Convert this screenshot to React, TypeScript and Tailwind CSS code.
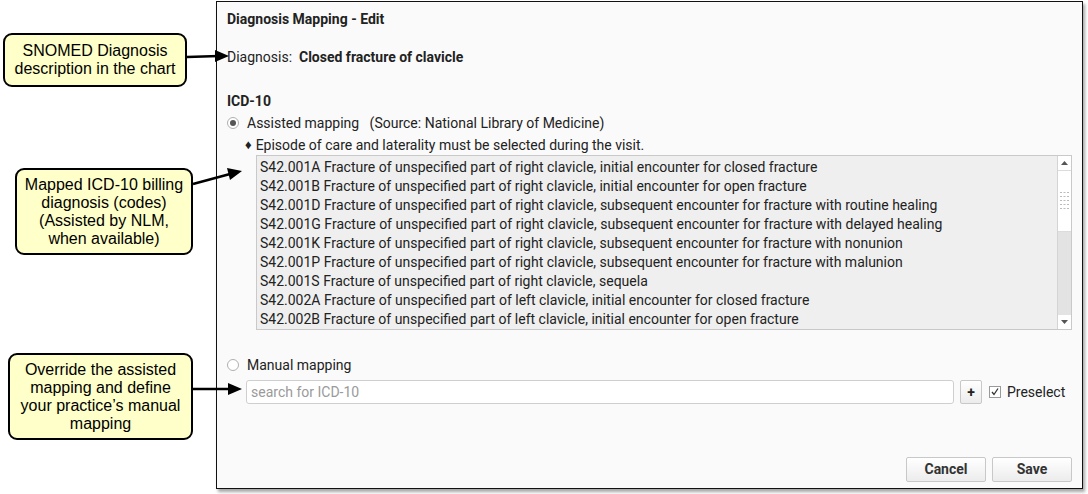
const codes = [
  "S42.001A Fracture of unspecified part of right clavicle, initial encounter for closed fracture",
  "S42.001B Fracture of unspecified part of right clavicle, initial encounter for open fracture",
  "S42.001D Fracture of unspecified part of right clavicle, subsequent encounter for fracture with routine healing",
  "S42.001G Fracture of unspecified part of right clavicle, subsequent encounter for fracture with delayed healing",
  "S42.001K Fracture of unspecified part of right clavicle, subsequent encounter for fracture with nonunion",
  "S42.001P Fracture of unspecified part of right clavicle, subsequent encounter for fracture with malunion",
  "S42.001S Fracture of unspecified part of right clavicle, sequela",
  "S42.002A Fracture of unspecified part of left clavicle, initial encounter for closed fracture",
  "S42.002B Fracture of unspecified part of left clavicle, initial encounter for open fracture",
];

const Callout = ({ className, lines }: { className: string; lines: string[] }) => (
  <div
    className={`flex flex-col items-center justify-center rounded-[9px] border-2 border-black bg-[#ffffc9] text-[16px] leading-[18px] text-black ${className}`}
    style={{ fontFamily: '"Liberation Sans", Arial, sans-serif' }}
  >
    {lines.map((l) => (
      <span key={l}>{l}</span>
    ))}
  </div>
);

const Radio = ({ checked }: { checked?: boolean }) => (
  <span className="flex h-[12px] w-[12px] items-center justify-center rounded-full border border-[#b0b0b0] bg-white">
    {checked && <span className="h-[6px] w-[6px] rounded-full bg-[#555]" />}
  </span>
);

const Button = ({ label }: { label: string }) => (
  <button className="h-[25px] w-[80px] rounded-[2px] border border-[#c8c8c8] bg-gradient-to-b from-white to-[#ececec] text-[14px] font-bold text-[#333]">
    {label}
  </button>
);

const Arrows = () => (
  <svg className="pointer-events-none absolute left-0 top-0" width="1088" height="494">
    <g stroke="#000" strokeWidth="2.5" fill="none">
      <line x1="187" y1="57" x2="219" y2="56" />
      <line x1="193" y1="184" x2="230" y2="174" />
      <line x1="193" y1="389" x2="230" y2="389" />
    </g>
    <g fill="#000">
      <path d="M229,56 L215,50 L215,62 z" />
      <path d="M242,171 L227,168 L230,180 z" />
      <path d="M242,389 L228,383 L228,395 z" />
    </g>
  </svg>
);

export default function App() {
  return (
    <div className="relative flex h-[494px] w-[1088px] bg-white">
      <div className="flex w-[216px] flex-col">
        <Callout className="ml-[3px] mt-[33px] h-[54px] w-[184px]" lines={["SNOMED Diagnosis", "description in the chart"]} />
        <Callout
          className="ml-[15px] mt-[81px] h-[87px] w-[178px]"
          lines={["Mapped ICD-10 billing", "diagnosis (codes)", "(Assisted by NLM,", "when available)"]}
        />
        <Callout
          className="ml-[8px] mt-[98px] h-[87px] w-[185px]"
          lines={["Override the assisted", "mapping and define", "your practice\u2019s manual", "mapping"]}
        />
      </div>

      <div
        className="mt-[1px] flex h-[488px] w-[867px] flex-col border border-[#111] bg-[#fafafa] pl-[10px] pr-[10px] pt-[9px] text-[14px] text-[#222] shadow-[2px_3px_3px_rgba(0,0,0,0.35)]"
        style={{ fontFamily: 'Roboto, "Noto Sans", sans-serif' }}
      >
        <div className="h-[16px] leading-[16px] font-bold">Diagnosis Mapping - Edit</div>
        <div className="mt-[22px] h-[16px] leading-[16px]">
          Diagnosis:&nbsp; <span className="font-bold">Closed fracture of clavicle</span>
        </div>
        <div className="mt-[28px] h-[16px] leading-[16px] font-bold">ICD-10</div>
        <div className="mt-[5px] flex h-[18px] items-center gap-[8px] pl-[0px]">
          <Radio checked />
          <span>Assisted mapping&nbsp;&nbsp; (Source: National Library of Medicine)</span>
        </div>
        <div className="mt-[5px] flex h-[16px] items-center gap-[4px] pl-[18px] leading-[16px]">
          <span className="text-[13px]">&#9830;</span>
          <span>Episode of care and laterality must be selected during the visit.</span>
        </div>
        <div className="ml-[29px] mt-[2px] flex h-[175px] w-[816px] border border-[#c9c9c9] bg-[#efefef]">
          <div className="flex-1 overflow-hidden pl-[3px] pt-[2px]">
            {codes.map((c) => (
              <div key={c} className="h-[19px] whitespace-nowrap leading-[19px]">
                {c}
              </div>
            ))}
          </div>
          <div className="flex w-[14px] flex-col border-l border-[#d4d4d4]">
            <div className="flex h-[14px] items-center justify-center bg-white">
              <svg width="7" height="4"><path d="M0,4 L3.5,0 L7,4 z" fill="#555" /></svg>
            </div>
            <div className="flex h-[62px] flex-col items-center justify-center border-y border-[#dcdcdc] bg-white">
              <svg width="9" height="18">
                {[0, 4, 8, 12, 16].map((y) => (
                  <g key={y} fill="#bbb">
                    <rect x="0" y={y} width="2" height="1" />
                    <rect x="3.5" y={y} width="2" height="1" />
                    <rect x="7" y={y} width="2" height="1" />
                  </g>
                ))}
              </svg>
            </div>
            <div className="flex-1 bg-[#e3e3e3]" />
            <div className="flex h-[14px] items-center justify-center bg-white">
              <svg width="7" height="4"><path d="M0,0 L3.5,4 L7,0 z" fill="#555" /></svg>
            </div>
          </div>
        </div>
        <div className="mt-[26px] flex h-[18px] items-center gap-[8px] pl-[0px]">
          <Radio />
          <span>Manual mapping</span>
        </div>
        <div className="mt-[6px] flex h-[24px] items-center pl-[19px]">
          <input
            className="h-[24px] w-[708px] rounded-[3px] border border-[#cfcfcf] bg-white px-[4px] text-[14px] placeholder:text-[#9a9a9a]"
            placeholder="search for ICD-10"
          />
          <button className="ml-[6px] h-[24px] w-[22px] rounded-[2px] border border-[#c8c8c8] bg-gradient-to-b from-white to-[#ececec] text-[14px] font-bold leading-none">
            +
          </button>
          <span className="ml-[7px] flex h-[12px] w-[12px] items-center justify-center border border-[#9a9a9a] bg-white">
            <svg width="8" height="8" viewBox="0 0 8 8">
              <path d="M1,4 L3,6.5 L7,0.5" stroke="#333" strokeWidth="1.3" fill="none" />
            </svg>
          </span>
          <span className="ml-[6px]">Preselect</span>
        </div>
        <div className="mt-[53px] flex justify-end gap-[6px]">
          <Button label="Cancel" />
          <Button label="Save" />
        </div>
      </div>
      <Arrows />
    </div>
  );
}
